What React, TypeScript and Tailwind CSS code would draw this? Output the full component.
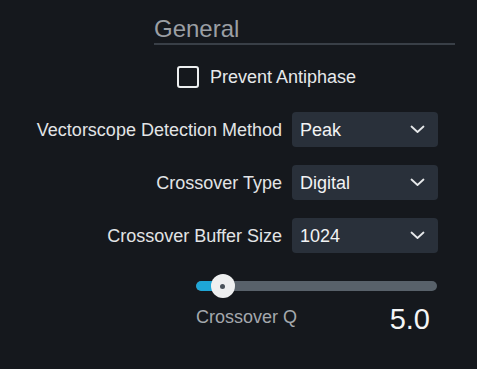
import { useState } from 'react';

interface SelectRowProps {
  label: string;
  value: string;
}

function Chevron() {
  return (
    <svg width="15" height="9" viewBox="0 0 15 9" fill="none">
      <path d="M1.5 1.5 L7.5 7 L13.5 1.5" stroke="#e6e8ea" strokeWidth="1.8" strokeLinecap="round" strokeLinejoin="round" />
    </svg>
  );
}

function SelectRow({ label, value }: SelectRowProps) {
  return (
    <div className="flex h-[35px] items-center">
      <div className="w-[282px] text-right text-[18px] leading-[24px] text-[#e2e4e6]">{label}</div>
      <button className="ml-[10px] flex h-[35px] w-[146px] items-center justify-between rounded-[4px] bg-[#29303a] pl-[8px] pr-[13px] text-[18px] leading-[24px] text-[#f2f3f4]">
        <span>{value}</span>
        <Chevron />
      </button>
    </div>
  );
}

export default function App() {
  const [checked, setChecked] = useState(false);
  const pct = 11;

  return (
    <div className="h-[369px] w-[477px] overflow-hidden bg-[#15181d] font-['Liberation_Sans',Arial,sans-serif]">
      {/* Section heading */}
      <div className="ml-[154px] w-[301px] pt-[15px]">
        <div className="border-b-2 border-[#393f47] text-[24px] leading-[28px] text-[#9b9fa4]">General</div>
      </div>

      {/* Checkbox */}
      <label className="ml-[177px] mt-[21px] flex h-[22px] items-center" onClick={() => setChecked(!checked)}>
        <span className="flex h-[22px] w-[22px] items-center justify-center rounded-[3px] border-2 border-[#eceeef]">
          {checked && <span className="h-[10px] w-[10px] bg-[#eceeef]" />}
        </span>
        <span className="ml-[11px] text-[18px] leading-[22px] text-[#e6e8ea]">Prevent Antiphase</span>
      </label>

      {/* Dropdowns */}
      <div className="mt-[24px] flex flex-col gap-[18px]">
        <SelectRow label="Vectorscope Detection Method" value="Peak" />
        <SelectRow label="Crossover Type" value="Digital" />
        <SelectRow label="Crossover Buffer Size" value="1024" />
      </div>

      {/* Slider */}
      <div className="relative ml-[196px] mt-[21px] flex h-[24px] w-[241px] items-center">
        <div className="relative h-[10px] w-full overflow-hidden rounded-full bg-[#58616a]">
          <div className="h-full rounded-full bg-[#1ea6d6]" style={{ width: `${pct + 2}%` }} />
        </div>
        <div
          className="absolute top-0 flex h-[24px] w-[24px] -translate-x-1/2 items-center justify-center rounded-full bg-[#eeeff0]"
          style={{ left: `${pct}%` }}
        >
          <span className="h-[5px] w-[5px] rounded-full bg-[#4a525b]" />
        </div>
      </div>

      <div className="ml-[196px] mt-[5px] flex w-[234px] items-start justify-between">
        <span className="mt-[2px] text-[18px] leading-[24px] text-[#a4a8ad]">Crossover Q</span>
        <span className="text-[29px] leading-[32px] text-[#f4f5f6]">5.0</span>
      </div>
    </div>
  );
}
